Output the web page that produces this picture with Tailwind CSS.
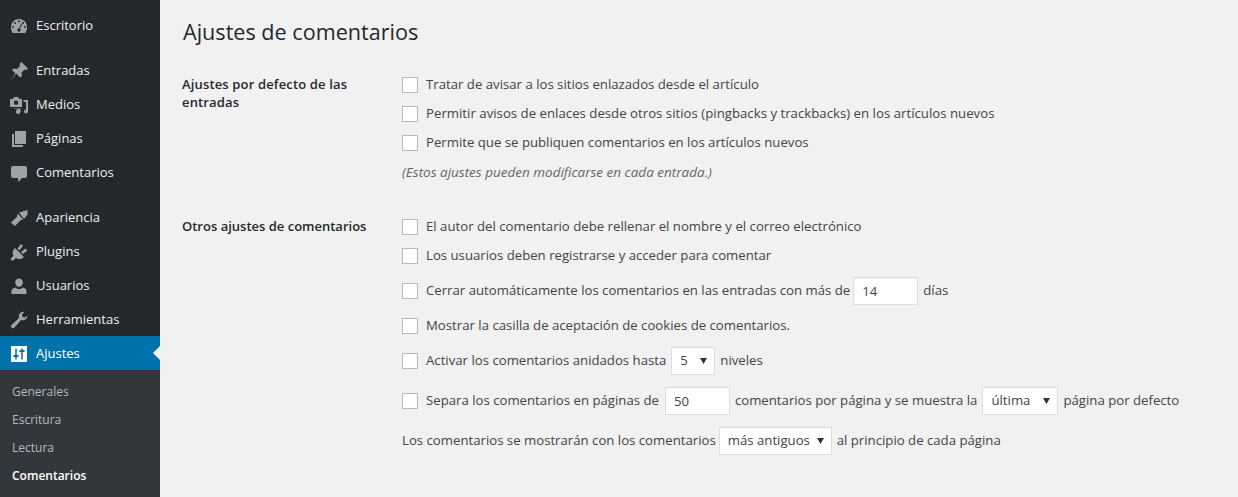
<!doctype html>
<html lang="es"><head><meta charset="utf-8"><script src="https://cdn.jsdelivr.net/npm/@tailwindcss/browser@4"></script></head>
<body class="bg-[#f1f1f1] font-['Open_Sans',sans-serif] text-[13px] text-[#444] overflow-hidden">
<div class="flex h-[497px] w-[1238px] overflow-hidden">
<aside class="w-[160px] h-full bg-[#23282d] text-[13px] text-[#eee] shrink-0">
  <nav class="pt-2">
    <div class="flex items-center h-[34px] pt-[2px] pl-[9px]"><svg class="w-5 h-5 text-[#9ea3a8] mr-[7px]" viewBox="0 0 20 20" fill="currentColor"><path fill-rule="evenodd" d="M3.760 17h12.480A7.970 7.970 0 0 0 18 11a8 8 0 0 0-16 0c0 2.300.66 4.400 1.760 6zM10 4.200a1 1 0 1 1 0 2 1 1 0 0 1 0-2zM6 6a1 1 0 1 1 0 2 1 1 0 0 1 0-2zm8 0a1 1 0 1 1 0 2 1 1 0 0 1 0-2zM4 10a1 1 0 1 1 0 2 1 1 0 0 1 0-2zm12 0a1 1 0 1 1 0 2 1 1 0 0 1 0-2zm-3.500-2.500.9.5L11 12.500a1.700 1.700 0 0 1 .7 1.500 1.700 1.700 0 0 1-3.400 0c0-.9.8-1.700 1.700-1.700h.2z"/></svg>Escritorio</div>
    <div class="h-[11px]"></div>
    <div class="flex items-center h-[34px] pt-[2px] pl-[9px]"><svg class="w-5 h-5 text-[#9ea3a8] mr-[7px]" viewBox="0 0 20 20" fill="currentColor"><path d="M12.500 1 19 7.500 17.500 9l-2-.5-3 3 .5 3.500-2 1.500-3.500-4L1 19l5.500-6.500L3 9l1.500-1.500L8 8l3-3-.5-2z"/></svg>Entradas</div>
    <div class="flex items-center h-[34px] pt-[2px] pl-[9px]"><svg class="w-5 h-5 text-[#9ea3a8] mr-[7px]" viewBox="0 0 20 20" fill="currentColor"><path fill-rule="evenodd" d="M1 4h3l1-2h4l1 2h3v8H1zm6 1.500a2.200 2.200 0 1 0 0 4.400 2.200 2.200 0 0 0 0-4.400z"/><path d="M14.500 5H19v11.500a2 2 0 1 1-2-2V7h-2.500zM5 13.500h6.500V16.500a2.300 2.300 0 1 1-2-2.200V14H5z"/></svg>Medios</div>
    <div class="flex items-center h-[34px] pt-[2px] pl-[9px]"><svg class="w-5 h-5 text-[#9ea3a8] mr-[7px]" viewBox="0 0 20 20" fill="currentColor"><path d="M6 2h11v13H6z"/><path d="M3 5h2v11h9v2H3z"/></svg>Páginas</div>
    <div class="flex items-center h-[34px] pt-[2px] pl-[9px]"><svg class="w-5 h-5 text-[#9ea3a8] mr-[7px]" viewBox="0 0 20 20" fill="currentColor"><path d="M4 3h12a2 2 0 0 1 2 2v8a2 2 0 0 1-2 2h-3l-3.500 4-.5-4H4a2 2 0 0 1-2-2V5a2 2 0 0 1 2-2z"/></svg>Comentarios</div>
    <div class="h-[11px]"></div>
    <div class="flex items-center h-[34px] pt-[2px] pl-[9px]"><svg class="w-5 h-5 text-[#9ea3a8] mr-[7px]" viewBox="0 0 20 20" fill="currentColor"><path d="M10 4.500 18.500 2v4.500L15 11z"/><path d="M8.800 5.500l5.300 6-2.600.8-5.500 5.700L2 14.500l5.800-5.500z"/></svg>Apariencia</div>
    <div class="flex items-center h-[34px] pt-[2px] pl-[9px]"><svg class="w-5 h-5 text-[#9ea3a8] mr-[7px]" viewBox="0 0 20 20" fill="currentColor"><path d="M6 6l9 9c-2 2-5 3-8 1l-3.500 3L1.500 17l3-3.500C2.500 10.500 4 8 6 6z"/><path d="M8.500 6.500l3.500-4.500 2 1.800-3.500 4.700zM12 10l4.500-3.500 1.800 2-4.300 3.500z"/></svg>Plugins</div>
    <div class="flex items-center h-[34px] pt-[2px] pl-[9px]"><svg class="w-5 h-5 text-[#9ea3a8] mr-[7px]" viewBox="0 0 20 20" fill="currentColor"><path d="M10 2.500a3.800 3.800 0 0 1 3.800 4c0 2.300-1.700 4.500-3.800 4.500S6.200 8.800 6.200 6.500a3.800 3.800 0 0 1 3.800-4zM6.500 11.500C7.500 12.500 8.700 13 10 13s2.500-.5 3.500-1.500c2 .3 4 1.500 4 3.500v3h-15v-3c0-2 2-3.200 4-3.500z"/></svg>Usuarios</div>
    <div class="flex items-center h-[34px] pt-[2px] pl-[9px]"><svg class="w-5 h-5 text-[#9ea3a8] mr-[7px]" viewBox="0 0 20 20" fill="currentColor"><path d="M18.500 5.500a4.800 4.800 0 0 1-6.500 4.500L5.500 17.500a1.900 1.900 0 0 1-3-2.500L10 8a4.800 4.800 0 0 1 5.500-6.200L13 4.500l.5 2.500 2.500.5z"/></svg>Herramientas</div>
    <div class="relative flex items-center h-[34px] pt-[2px] pl-[9px] bg-[#0073aa] text-white"><svg class="w-5 h-5 mr-[7px]" viewBox="0 0 20 20"><path fill="#fff" d="M2 2h16v16H2z"/><path fill="none" stroke="#0073aa" stroke-width="1.500" d="M7 4.500v11M13 4.500v11"/><path fill="none" stroke="#0073aa" stroke-width="2" d="M4.500 12h5M10.500 7h5"/></svg>Ajustes<span class="absolute right-0 top-[10px] border-y-[7px] border-r-[7px] border-y-transparent border-r-[#f1f1f1]"></span></div>
  </nav>
  <ul class="bg-[#32373c] h-[127px] pt-[8px] pl-3 text-[12px] text-[#b4b9be]">
    <li class="h-7 leading-7">Generales</li>
    <li class="h-7 leading-7">Escritura</li>
    <li class="h-7 leading-7">Lectura</li>
    <li class="h-7 leading-7 font-semibold text-white">Comentarios</li>
  </ul>
</aside>
<main class="flex-1 pl-[22px] pt-[17px] text-[13.2px]">
  <h1 class="ml-[1px] text-[21.6px] leading-[29px] text-[#23282d] mb-[24px]">Ajustes de comentarios</h1>
  <div class="grid grid-cols-[220px_1fr]">
    <h2 class="font-semibold text-[13px] tracking-[.15px] text-[#23282d] leading-[18px] pt-[5px] pr-2 w-[190px]">Ajustes por defecto de las entradas</h2>
    <div class="flex flex-col">
      <label class="flex items-center h-[29px]"><span class="w-4 h-4 bg-white border border-[#b4b9be] mr-2"></span>Tratar de avisar a los sitios enlazados desde el artículo</label>
      <label class="flex items-center h-[29px]"><span class="w-4 h-4 bg-white border border-[#b4b9be] mr-2"></span><span class="tracking-[.02px]">Permitir avisos de enlaces desde otros sitios (pingbacks y trackbacks) en los artículos nuevos</span></label>
      <label class="flex items-center h-[29px]"><span class="w-4 h-4 bg-white border border-[#b4b9be] mr-2"></span>Permite que se publiquen comentarios en los artículos nuevos</label>
      <p class="italic text-[13.5px] text-[#666] h-[29px] leading-[29px] mt-[1px]">(Estos ajustes pueden modificarse en cada entrada.)</p>
    </div>
    <h2 class="font-semibold text-[13px] text-[#23282d] leading-[18px] pt-[30px]">Otros ajustes de comentarios</h2>
    <div class="flex flex-col pt-[25px]">
      <label class="flex items-center h-[29px]"><span class="w-4 h-4 bg-white border border-[#b4b9be] mr-2"></span>El autor del comentario debe rellenar el nombre y el correo electrónico</label>
      <label class="flex items-center h-[29px]"><span class="w-4 h-4 bg-white border border-[#b4b9be] mr-2"></span>Los usuarios deben registrarse y acceder para comentar</label>
      <label class="flex items-center h-[41px]"><span class="w-4 h-4 bg-white border border-[#b4b9be] mr-2"></span>Cerrar automáticamente los comentarios en las entradas con más de<span class="ml-[3px] mr-[5px] w-[65px] h-[28px] leading-[26px] pl-2 bg-white border border-[#ddd] shadow-[inset_0_1px_2px_rgba(0,0,0,.07)]">14</span>días</label>
      <label class="flex items-center h-[29px]"><span class="w-4 h-4 bg-white border border-[#b4b9be] mr-2"></span>Mostrar la casilla de aceptación de cookies de comentarios.</label>
      <label class="flex items-center h-[41px]"><span class="w-4 h-4 bg-white border border-[#b4b9be] mr-2"></span>Activar los comentarios anidados hasta<span class="mx-[5px] flex items-center justify-between w-[44px] h-[28px] pl-2 pr-[7px] bg-white border border-[#ddd]">5<svg class="w-[7px] h-[6px]" viewBox="0 0 7 6"><path fill="#333" d="M0 0h7L3.500 6z"/></svg></span>niveles</label>
      <label class="flex items-center h-[39px]"><span class="w-4 h-4 bg-white border border-[#b4b9be] mr-2"></span>Separa los comentarios en páginas de<span class="ml-[6px] mr-[5px] w-[65px] h-[28px] leading-[26px] pl-2 bg-white border border-[#ddd]">50</span>comentarios por página y se muestra la<span class="mx-[5px] flex items-center justify-between w-[76px] h-[28px] pl-2 pr-[7px] bg-white border border-[#ddd]">última<svg class="w-[7px] h-[6px]" viewBox="0 0 7 6"><path fill="#333" d="M0 0h7L3.500 6z"/></svg></span>página por defecto</label>
      <div class="flex items-center h-[41px]">Los comentarios se mostrarán con los comentarios<span class="ml-[3px] mr-[5px] flex items-center justify-between w-[113px] h-[28px] pl-2 pr-[7px] bg-white border border-[#ddd]">más antiguos<svg class="w-[7px] h-[6px]" viewBox="0 0 7 6"><path fill="#333" d="M0 0h7L3.500 6z"/></svg></span>al principio de cada página</div>
    </div>
  </div>
</main>
</div>
</body></html>
